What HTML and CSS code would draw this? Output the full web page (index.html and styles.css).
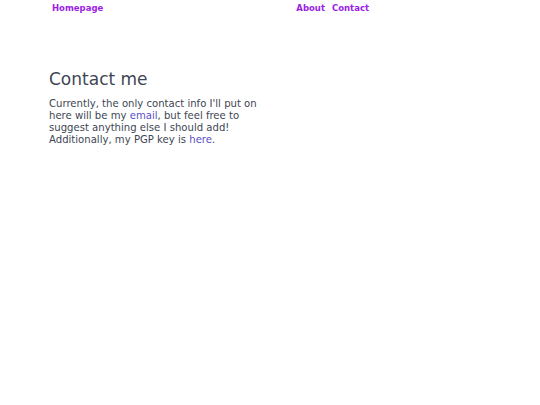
FILE: index.html
```html
<!DOCTYPE html>
<html lang="en">
<head>
    <meta charset="UTF-8">
    <meta name="viewport" content="width=device-width, initial-scale=1.0">
    <title>Contact me</title>
    <link rel="stylesheet" href="styles.css">
</head>
<body>
    <nav class="navbar">
        <a href="#" class="nav-link">Homepage</a>
        <div class="nav-right">
            <a href="#" class="nav-link">About</a>
            <a href="#" class="nav-link">Contact</a>
        </div>
    </nav>
    <main class="content">
        <h1>Contact me</h1>
        <p>Currently, the only contact info I'll put on here will be my <a href="#">email</a>, but feel free to suggest anything else I should add! Additionally, my PGP key is <a href="#">here</a>.</p>
    </main>
</body>
</html>
```

FILE: styles.css
```css
* {
    margin: 0;
    padding: 0;
    box-sizing: border-box;
    font-family: "DejaVu Sans", sans-serif;
}

body {
    background: white;
    color: #3e4654;
}

.navbar {
    display: flex;
    justify-content: space-between;
    width: 369px;
    padding: 2px 0 0 52px;
}

.nav-right {
    display: flex;
    gap: 7px;
}

.nav-link {
    color: #9a1ee6;
    font-weight: bold;
    font-size: 8.5px;
    text-decoration: none;
    line-height: 12px;
}

.content {
    padding: 53px 0 0 49px;
    width: 270px;
}

h1 {
    font-size: 17px;
    font-weight: normal;
    color: #3e4654;
    line-height: 24px;
    margin-bottom: 7px;
}

p {
    font-size: 10.1px;
    line-height: 12px;
}

p a {
    color: #5a4fc8;
    text-decoration: none;
}
```
